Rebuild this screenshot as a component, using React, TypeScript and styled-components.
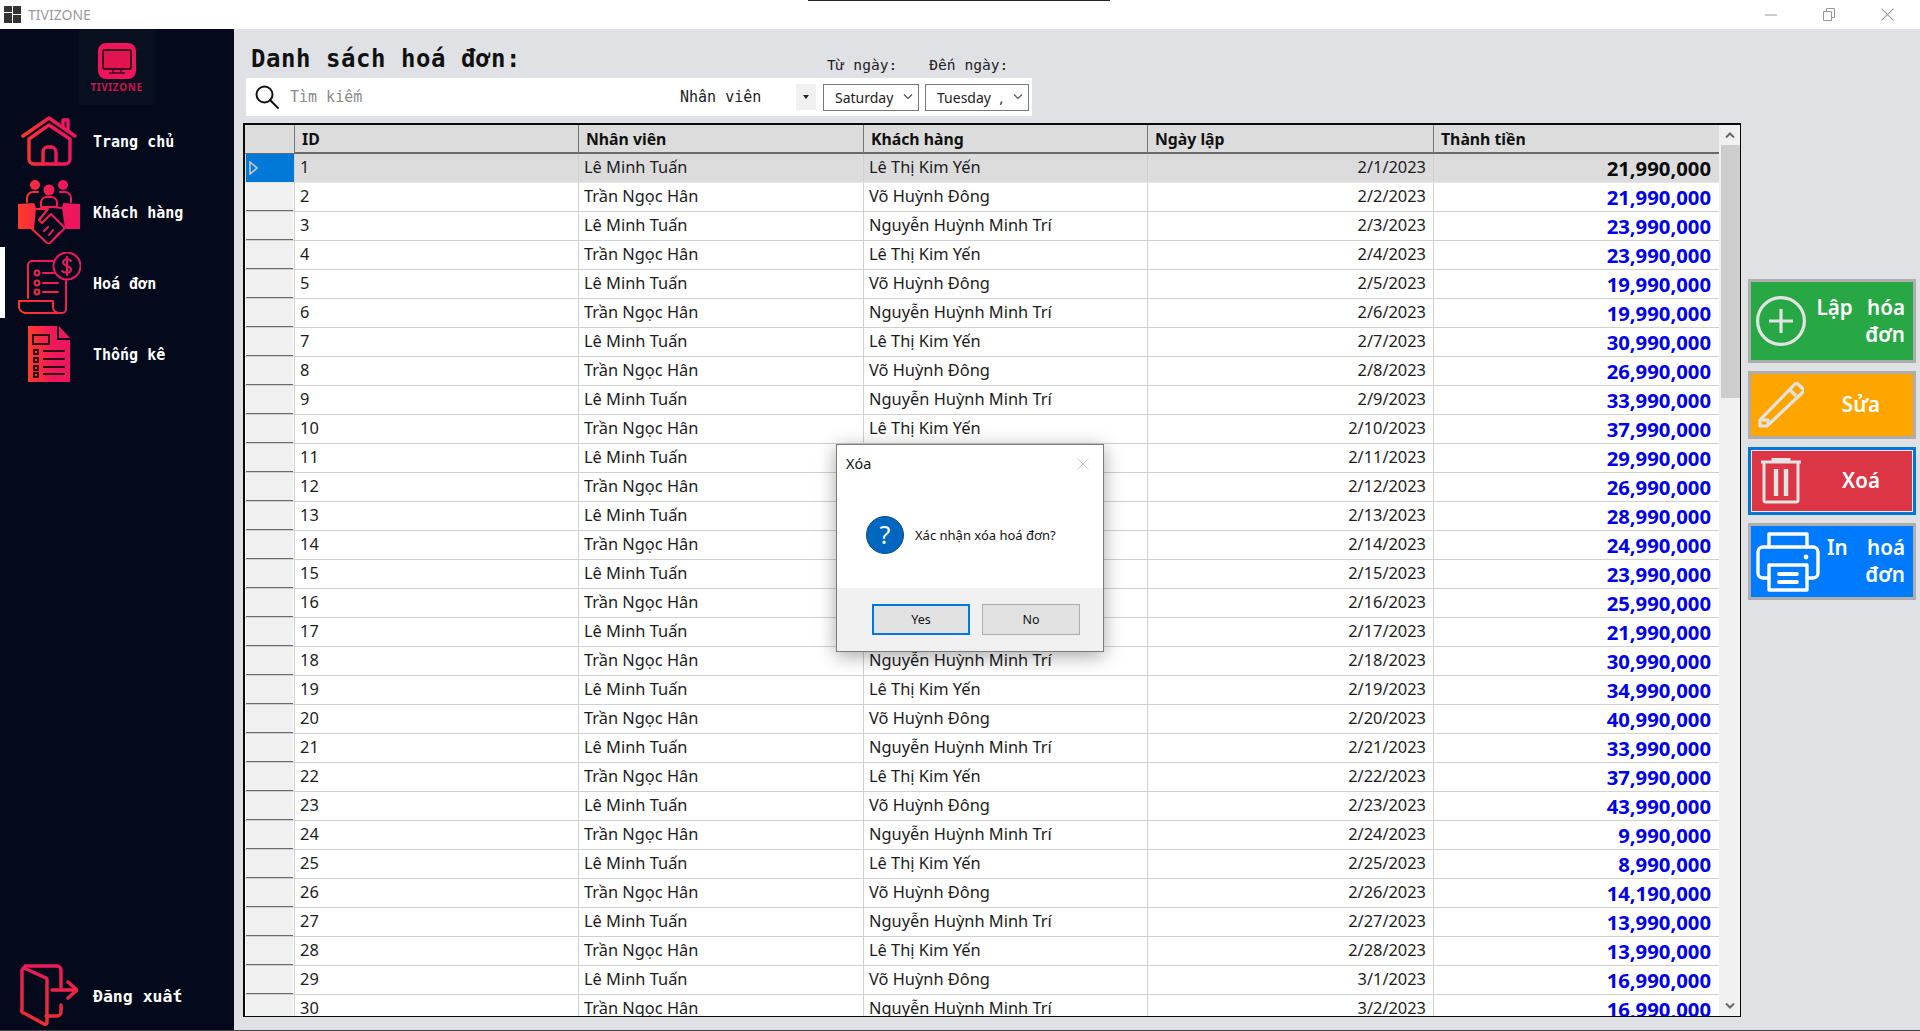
import styled, { createGlobalStyle } from 'styled-components'

const GlobalStyle = createGlobalStyle`
  html, body { margin: 0; padding: 0; overflow: hidden; }
  #root { width: 1920px; height: 1031px; }
`

const MONO = '"DejaVu Sans Mono", "Liberation Mono", monospace'
const UI = '"Noto Sans", "Open Sans", sans-serif'

const Page = styled.div`
  position: relative;
  width: 1920px;
  height: 1031px;
  box-sizing: border-box;
  display: flex;
  flex-direction: column;
  overflow: hidden;
  background: #e0e1e5;
  border-bottom: 1px solid #444;
  font-family: ${UI};
`
const TopEdge = styled.div`
  position: absolute;
  top: 0;
  left: 808px;
  width: 302px;
  height: 1px;
  background: #222;
`
const TitleBar = styled.div`
  flex: none;
  height: 29px;
  display: flex;
  align-items: center;
  background: #fff;
  padding: 0 4px;
`
const AppName = styled.span`
  margin-left: 7px;
  font-size: 14px;
  color: #9a9a9a;
  flex: 1;
`
const WinButton = styled.div`
  width: 58px;
  height: 29px;
  display: flex;
  align-items: center;
  justify-content: center;
`
const Body = styled.div`
  flex: 1;
  min-height: 0;
  display: flex;
`
const Sidebar = styled.nav`
  flex: none;
  width: 234px;
  display: flex;
  flex-direction: column;
  background: #040a1c;
`
const LogoBox = styled.div`
  align-self: center;
  margin-left: -1px;
  width: 76px;
  height: 76px;
  box-sizing: border-box;
  padding-top: 14px;
  background: #08101f;
  display: flex;
  flex-direction: column;
  align-items: center;
`
const LogoText = styled.span`
  margin-top: 2px;
  font-family: ${UI};
  font-size: 10px;
  line-height: 12px;
  font-weight: 700;
  letter-spacing: 0.6px;
  color: #cc1450;
`
const NavList = styled.div`
  flex: 1;
  display: flex;
  flex-direction: column;
`
const NavRow = styled.div<{ $active?: boolean }>`
  height: 71px;
  display: flex;
  align-items: center;
  box-sizing: border-box;
  border-left: 5px solid ${(p) => (p.$active ? '#fff' : 'transparent')};
`
const NavIcon = styled.div`
  flex: none;
  width: 88px;
  display: flex;
  justify-content: center;
`
const NavLabel = styled.span<{ $large?: boolean }>`
  margin-top: ${(p) => (p.$large ? '2px' : '3px')};
  font-family: ${MONO};
  font-size: ${(p) => (p.$large ? '16.5px' : '15px')};
  font-weight: 700;
  color: #fff;
`
const LogoutRow = styled(NavRow)`
  height: 70px;
`
const Main = styled.main`
  flex: 1;
  min-width: 0;
  display: flex;
`
const Content = styled.div`
  flex: none;
  width: 1507px;
  box-sizing: border-box;
  padding-left: 9px;
  display: flex;
  flex-direction: column;
`
const TopRow = styled.div`
  width: 789px;
  height: 49px;
  display: flex;
  align-items: flex-end;
`
const Title = styled.h1`
  flex: 1;
  margin: 0 0 4px 8px;
  font-family: ${MONO};
  font-size: 24px;
  letter-spacing: 0.55px;
  line-height: 30px;
  font-weight: 700;
  color: #111;
`
const DateLabels = styled.div`
  flex: none;
  width: 205px;
  display: flex;
  gap: 32px;
  margin-bottom: 4px;
`
const DateLabel = styled.span`
  font-family: ${MONO};
  font-size: 14.6px;
  line-height: 18px;
  color: #222;
`
const SearchBar = styled.div`
  margin-left: 3px;
  width: 786px;
  height: 38px;
  box-sizing: border-box;
  padding: 0 3px 0 9px;
  display: flex;
  align-items: center;
  background: #fff;
`
const SearchText = styled.span`
  flex: 1;
  margin-left: 11px;
  font-family: ${MONO};
  font-size: 15px;
  color: #8a8a8a;
`
const ComboText = styled.span`
  width: 116px;
  font-family: ${MONO};
  font-size: 15px;
  color: #222;
`
const ComboArrow = styled.div`
  width: 20px;
  height: 26px;
  background: #f0f0f0;
  display: flex;
  align-items: center;
  justify-content: center;
  &::after {
    content: '';
    border: 3px solid transparent;
    border-top: 4px solid #222;
    border-bottom: 0;
  }
`
const DateBox = styled.div<{ $w: number; $ml: number }>`
  width: ${(p) => p.$w}px;
  margin-left: ${(p) => p.$ml}px;
  height: 27px;
  box-sizing: border-box;
  padding: 0 5px 0 11px;
  display: flex;
  align-items: center;
  justify-content: space-between;
  border: 1px solid #7a7a7a;
  font-size: 14px;
  word-spacing: 5px;
  white-space: pre;
  color: #222;
  background: #fff;
`
const GridFrame = styled.div`
  margin-top: 7px;
  width: 1498px;
  height: 894px;
  box-sizing: border-box;
  border: solid #0a0a0a;
  border-width: 2px 1.5px 1.5px 2px;
  display: flex;
  overflow: hidden;
  background: #f0f0f0;
`
const GridBody = styled.div`
  flex: 1;
  min-width: 0;
  overflow: hidden;
`
const Row = styled.div<{ $selected?: boolean }>`
  height: 29px;
  box-sizing: border-box;
  display: grid;
  grid-template-columns: 49px 284px 285px 284px 286px 285px;
  background: ${(p) => (p.$selected ? '#dcdcdc' : '#fff')};
  border-bottom: 1px solid ${(p) => (p.$selected ? '#e6e6e6' : '#d0d0d0')};
`
const HeaderRow = styled(Row)`
  background: #dcdcdc;
  border-bottom: 2px solid #696969;
`
const HeadCell = styled.div`
  padding: 1px 0 0 7px;
  font-size: 15.8px;
  font-weight: 700;
  line-height: 27px;
  color: #111;
  border-left: 1px solid #777;
`
const Corner = styled.div`
  background: #dcdcdc;
`
const RowHead = styled.div<{ $selected?: boolean }>`
  margin: 0 ${(p) => (p.$selected ? '0' : '1px')} 0 1px;
  display: flex;
  align-items: center;
  padding-left: 3px;
  background: ${(p) => (p.$selected ? '#0078d7' : '#f0f0f0')};
  border-bottom: 1px solid ${(p) => (p.$selected ? '#0078d7' : '#696969')};
`
const Cell = styled.div`
  padding-left: 5px;
  font-size: 16.4px;
  line-height: 25px;
  color: #1c1c1c;
  white-space: nowrap;
  border-left: 1px solid #d0d0d0;
`
const DateCell = styled(Cell)`
  padding: 0 7px 0 0;
  text-align: right;
`
const MoneyCell = styled(Cell)<{ $selected?: boolean }>`
  padding: 2px 7px 0 0;
  text-align: right;
  font-size: 20.3px;
  font-weight: 700;
  color: ${(p) => (p.$selected ? '#0a0a0a' : '#0000ee')};
`
const ScrollBar = styled.div`
  flex: none;
  width: 21px;
  display: flex;
  flex-direction: column;
  background: #f0f0f0;
`
const ScrollArrow = styled.div`
  flex: none;
  height: 20px;
  display: flex;
  align-items: center;
  justify-content: center;
`
const ScrollThumb = styled.div`
  flex: none;
  height: 253px;
  margin: 0 0 0 2px;
  background: #cdcdcd;
`
const ScrollTrack = styled.div`
  flex: 1;
`
const Actions = styled.aside`
  flex: none;
  width: 168px;
  margin-left: 7px;
  padding-top: 250px;
  display: flex;
  flex-direction: column;
  gap: 8px;
`
const ActionButton = styled.button<{ $bg: string; $h: number; $focus?: boolean }>`
  height: ${(p) => p.$h}px;
  width: 168px;
  box-sizing: border-box;
  padding: 0;
  display: flex;
  align-items: center;
  background: ${(p) => p.$bg};
  border: 3px solid ${(p) => (p.$focus ? '#0078d7' : '#adadad')};
  box-shadow: inset 0 0 0 ${(p) => (p.$focus ? '1px #e8e8e8' : '0 transparent')};
  font-family: ${UI};
  color: #fff;
`
const ActionIcon = styled.div<{ $w: number }>`
  flex: none;
  width: ${(p) => p.$w}px;
  padding-left: 2px;
  display: flex;
  justify-content: center;
`
const ActionLabel = styled.span<{ $right?: boolean; $gap?: number }>`
  flex: 1;
  margin-top: -1px;
  padding-right: ${(p) => (p.$right ? '8px' : '0')};
  text-align: ${(p) => (p.$right ? 'right' : 'center')};
  font-size: 20.6px;
  line-height: 27px;
  font-weight: 600;
  word-spacing: ${(p) => p.$gap ?? 9}px;
`
const Dialog = styled.div`
  position: absolute;
  left: 836px;
  top: 444px;
  width: 268px;
  height: 208px;
  box-sizing: border-box;
  display: flex;
  flex-direction: column;
  background: #fff;
  border: 1px solid #7c7c7c;
  box-shadow: 0 4px 18px rgba(0, 0, 0, 0.35);
`
const DialogHead = styled.div`
  flex: none;
  height: 37px;
  padding: 0 14px 0 9px;
  display: flex;
  align-items: center;
  justify-content: space-between;
  font-size: 14.4px;
  color: #111;
`
const DialogBody = styled.div`
  flex: 1;
  padding-left: 29px;
  display: flex;
  align-items: center;
  gap: 11px;
  font-size: 13px;
  color: #111;
`
const DialogFoot = styled.div`
  flex: none;
  height: 63px;
  box-sizing: border-box;
  padding: 16px 23px 0 35px;
  display: flex;
  gap: 12px;
  background: #f0f0f0;
`
const DialogButton = styled.button<{ $focus?: boolean }>`
  width: 98px;
  height: 31px;
  padding: 0;
  box-sizing: border-box;
  background: #e1e1e1;
  border: ${(p) => (p.$focus ? '2px solid #0078d7' : '1px solid #adadad')};
  font-family: ${UI};
  font-size: 12.5px;
  color: #111;
`

const employees = ['Lê Minh Tuấn', 'Trần Ngọc Hân']
const customers = ['Lê Thị Kim Yến', 'Võ Huỳnh Đông', 'Nguyễn Huỳnh Minh Trí']
const amounts = [
  '21,990,000', '21,990,000', '23,990,000', '23,990,000', '19,990,000', '19,990,000',
  '30,990,000', '26,990,000', '33,990,000', '37,990,000', '29,990,000', '26,990,000',
  '28,990,000', '24,990,000', '23,990,000', '25,990,000', '21,990,000', '30,990,000',
  '34,990,000', '40,990,000', '33,990,000', '37,990,000', '43,990,000', '9,990,000',
  '8,990,000', '14,190,000', '13,990,000', '13,990,000', '16,990,000', '16,990,000',
]
const rows = amounts.map((amount, i) => ({
  id: i + 1,
  employee: employees[i % 2],
  customer: customers[i % 3],
  date: i < 28 ? `2/${i + 1}/2023` : `3/${i - 27}/2023`,
  amount,
}))

const Grad = ({ id, w, h = 0 }: { id: string; w: number; h?: number }) => (
  <defs>
    <linearGradient id={id} gradientUnits="userSpaceOnUse" x1="0" y1={h} x2={w} y2="0">
      <stop offset="0" stopColor="#ff3b2b" />
      <stop offset="0.6" stopColor="#f0185a" />
      <stop offset="1" stopColor="#ee1560" />
    </linearGradient>
  </defs>
)

const WindowIcon = () => (
  <svg width="17" height="17" viewBox="0 0 17 17">
    <path d="M0 0h8v6H0zM9 0h8v8H9zM0 7h8v10H0zM9 9h8v8H9z" fill="#333" />
  </svg>
)

const LogoIcon = () => (
  <svg width="38" height="36" viewBox="0 0 38 36">
    <rect width="38" height="36" rx="8" fill="#f0145a" />
    <rect x="5" y="7" width="28" height="19" rx="2" fill="#e0144f" stroke="#3a0a20" strokeWidth="2" />
    <path d="M11 30h16M15 26h8v4h-8z" stroke="#3a0a20" strokeWidth="1.6" fill="none" />
  </svg>
)

const HomeIcon = () => (
  <svg width="56" height="50" viewBox="0 0 56 50" fill="none">
    <Grad id="g-home" w={56} />
    <g stroke="url(#g-home)" strokeWidth="3.4" strokeLinecap="round" strokeLinejoin="round">
      <path d="M2 20 28 2l26 18" />
      <path d="M28 9 8 23v20a5 5 0 0 0 5 5h31a5 5 0 0 0 5-5V23L28 9z" />
      <path d="M22 48V36a5 5 0 0 1 5-5h3a5 5 0 0 1 5 5v12" />
      <path d="M42 11V4h5v11" />
    </g>
  </svg>
)

const HandshakeIcon = () => (
  <svg width="62" height="64" viewBox="0 0 62 64" fill="none">
    <Grad id="g-hand" w={62} />
    <g fill="url(#g-hand)">
      <circle cx="17" cy="5" r="5" />
      <circle cx="31" cy="10" r="5.5" />
      <circle cx="45" cy="5" r="5" />
      <path d="M0 24l16-1 2 5-2 21H0z" />
      <path d="M62 24l-17-1-1 5 3 21h15z" />
    </g>
    <g stroke="url(#g-hand)" strokeWidth="2" strokeLinecap="round" strokeLinejoin="round">
      <path d="M9 22v-4a6 6 0 0 1 6-6h5M53 22v-4a6 6 0 0 0-6-6h-5" />
      <path d="M23 27v-5a6 6 0 0 1 6-5h4a6 6 0 0 1 6 5v5H23z" />
      <path d="M18 29h12l-9 11 3 3 9-9 13 13" />
      <path d="M12 47l17 16a3 3 0 0 0 4-1l15-15M44 28l-9-1M26 51l4-4M31 55l4-5M36 59l5-6" />
    </g>
  </svg>
)

const InvoiceIcon = () => (
  <svg width="64" height="62" viewBox="0 0 64 62" fill="none">
    <Grad id="g-inv" w={64} h={62} />
    <g stroke="url(#g-inv)" strokeWidth="2" strokeLinecap="round" strokeLinejoin="round">
      <path d="M11 46V13a4 4 0 0 1 4-4h21" />
      <path d="M49 29v28a4 4 0 0 1-4 4H8a7 7 0 0 1-6-8v-4h34v6a6 6 0 0 0 6 6" />
      <circle cx="50" cy="14" r="13.5" />
      <path d="M54 9c-1-2-7-3-8 1 0 5 9 3 8 8-1 4-7 3-9 1M50 5v18" />
      <circle cx="20" cy="21" r="2.4" />
      <circle cx="20" cy="31" r="2.4" />
      <circle cx="20" cy="40" r="2.4" />
      <path d="M26 21h11M26 31h15M26 40h15" />
    </g>
  </svg>
)

const ReportIcon = () => (
  <svg width="42" height="56" viewBox="0 0 42 56">
    <Grad id="g-rep" w={42} />
    <path d="M0 0h29v14h13v42H0z" fill="url(#g-rep)" />
    <path d="M31 0l11 12H31z" fill="url(#g-rep)" />
    <g fill="none" stroke="#2a0616" strokeWidth="2">
      <rect x="5" y="9" width="16" height="9" />
      <rect x="6" y="24" width="4" height="4" />
      <rect x="6" y="32" width="4" height="4" />
      <rect x="6" y="40" width="4" height="4" />
      <rect x="6" y="47" width="4" height="4" />
      <path d="M15 25h22M15 33h22M15 41h22M15 48h22" />
    </g>
  </svg>
)

const LogoutIcon = () => (
  <svg width="58" height="64" viewBox="0 0 58 64" fill="none">
    <defs>
      <linearGradient id="g-out" gradientUnits="userSpaceOnUse" x1="0" y1="0" x2="0" y2="64">
        <stop offset="0" stopColor="#f0185a" />
        <stop offset="1" stopColor="#ee3030" />
      </linearGradient>
    </defs>
    <g stroke="url(#g-out)" strokeWidth="3.4" strokeLinecap="round" strokeLinejoin="round">
      <path d="M5 3h32a4 4 0 0 1 4 4v17M41 42v7a4 4 0 0 1-4 4H26" />
      <path d="M4 5 26 15a2 2 0 0 1 1 2v43a2 2 0 0 1-3 1L4 50a2 2 0 0 1-2-3V7a3 3 0 0 1 2-2z" />
      <path d="M32 27h24M48 19l9 8-9 8" />
    </g>
  </svg>
)

const SearchIcon = () => (
  <svg width="24" height="24" viewBox="0 0 24 24" fill="none" stroke="#111" strokeWidth="2">
    <ellipse cx="9.5" cy="9.5" rx="8" ry="8" />
    <path d="M15 15l8 8" strokeLinecap="round" />
  </svg>
)

const Chevron = ({ up, color = '#555', width = 1.2 }: { up?: boolean; color?: string; width?: number }) => (
  <svg width="10" height="6" viewBox="0 0 10 6" fill="none" stroke={color} strokeWidth={width}>
    <path d={up ? 'M1 5.5 5 1.5l4 4' : 'M1 .5l4 4 4-4'} />
  </svg>
)

const CloseGlyph = ({ size, color }: { size: number; color: string }) => (
  <svg width={size} height={size} viewBox="0 0 12 12" fill="none" stroke={color} strokeWidth="1">
    <path d="M.5.5l11 11M11.5.5l-11 11" />
  </svg>
)

const PlusIcon = () => (
  <svg width="50" height="50" viewBox="0 0 50 50" fill="none" stroke="#e3e3e3" strokeWidth="3.2">
    <circle cx="25" cy="25" r="23.4" />
    <path d="M25 13v24M13 25h24" />
  </svg>
)

const PencilIcon = () => (
  <svg width="46" height="46" viewBox="0 0 46 46" fill="none" stroke="#e3e3e3" strokeWidth="3.2" strokeLinejoin="round">
    <path d="M2 44v-6L36 3a3 3 0 0 1 5 0l3 3a3 3 0 0 1 0 5L9 44H2z" />
    <path d="M4 38h6v4M32 8l6 6" />
  </svg>
)

const TrashIcon = () => (
  <svg width="40" height="46" viewBox="0 0 40 46" fill="none" stroke="#e3e3e3" strokeWidth="3">
    <path d="M0 4h40M12 3V1h16v2" />
    <path d="M3 4v38a2 2 0 0 0 2 2h30a2 2 0 0 0 2-2V4" />
    <path d="M15 11v27M25 11v27" strokeWidth="4.4" />
  </svg>
)

const PrinterIcon = () => (
  <svg width="64" height="60" viewBox="0 0 64 60" fill="none" stroke="#fff" strokeWidth="3.4" strokeLinejoin="round" strokeLinecap="round">
    <path d="M13 15V2h38v13" />
    <path d="M13 46H7a5 5 0 0 1-5-5V20a5 5 0 0 1 5-5h50a5 5 0 0 1 5 5v21a5 5 0 0 1-5 5h-6" />
    <path d="M13 33h38v25H13z" />
    <path d="M23 42h18M23 50h18" strokeWidth="3.8" />
    <circle cx="50" cy="25" r="2.4" fill="#fff" stroke="none" />
  </svg>
)

const QuestionIcon = () => (
  <svg width="38" height="38" viewBox="0 0 38 38">
    <circle cx="19" cy="19" r="18.5" fill="#0067c0" stroke="#0c4a80" />
    <text x="19" y="27.5" textAnchor="middle" fontFamily={UI} fontSize="25" fill="#fff">?</text>
  </svg>
)

const navItems = [
  { label: 'Trang chủ', icon: <HomeIcon /> },
  { label: 'Khách hàng', icon: <HandshakeIcon /> },
  { label: 'Hoá đơn', icon: <InvoiceIcon />, active: true },
  { label: 'Thống kê', icon: <ReportIcon /> },
]

const App = () => {
  return (
    <Page>
      <GlobalStyle />
      <TopEdge />
      <TitleBar>
        <WindowIcon />
        <AppName>TIVIZONE</AppName>
        <WinButton>
          <svg width="12" height="2"><path d="M0 1h12" stroke="#999" /></svg>
        </WinButton>
        <WinButton>
          <svg width="13" height="13" fill="none" stroke="#999"><path d="M.5 3.5h8v9h-8zM3.5 3V.5h8v9H9" /></svg>
        </WinButton>
        <WinButton>
          <CloseGlyph size={13} color="#999" />
        </WinButton>
      </TitleBar>
      <Body>
        <Sidebar>
          <LogoBox>
            <LogoIcon />
            <LogoText>TIVIZONE</LogoText>
          </LogoBox>
          <NavList>
            {navItems.map((item) => (
              <NavRow key={item.label} $active={item.active}>
                <NavIcon>{item.icon}</NavIcon>
                <NavLabel>{item.label}</NavLabel>
              </NavRow>
            ))}
          </NavList>
          <LogoutRow>
            <NavIcon><LogoutIcon /></NavIcon>
            <NavLabel $large>Đăng xuất</NavLabel>
          </LogoutRow>
        </Sidebar>
        <Main>
          <Content>
            <TopRow>
              <Title>Danh sách hoá đơn:</Title>
              <DateLabels>
                <DateLabel>Từ ngày:</DateLabel>
                <DateLabel>Đến ngày:</DateLabel>
              </DateLabels>
            </TopRow>
            <SearchBar>
              <SearchIcon />
              <SearchText>Tìm kiếm</SearchText>
              <ComboText>Nhân viên</ComboText>
              <ComboArrow />
              <DateBox $w={96} $ml={7}>Saturday<Chevron /></DateBox>
              <DateBox $w={104} $ml={6}>Tuesday ,<Chevron /></DateBox>
            </SearchBar>
            <GridFrame>
              <GridBody>
                <HeaderRow>
                  <Corner />
                  <HeadCell>ID</HeadCell>
                  <HeadCell>Nhân viên</HeadCell>
                  <HeadCell>Khách hàng</HeadCell>
                  <HeadCell>Ngày lập</HeadCell>
                  <HeadCell>Thành tiền</HeadCell>
                </HeaderRow>
                {rows.map((row, i) => (
                  <Row key={row.id} $selected={i === 0}>
                    <RowHead $selected={i === 0}>
                      {i === 0 && (
                        <svg width="9" height="14" viewBox="0 0 9 14">
                          <path d="M1 1l7 6-7 6z" fill="#0078d7" stroke="#c8c8c8" strokeWidth="1.6" />
                        </svg>
                      )}
                    </RowHead>
                    <Cell>{row.id}</Cell>
                    <Cell>{row.employee}</Cell>
                    <Cell>{row.customer}</Cell>
                    <DateCell>{row.date}</DateCell>
                    <MoneyCell $selected={i === 0}>{row.amount}</MoneyCell>
                  </Row>
                ))}
              </GridBody>
              <ScrollBar>
                <ScrollArrow><Chevron up width={2} color="#666" /></ScrollArrow>
                <ScrollThumb />
                <ScrollTrack />
                <ScrollArrow><Chevron width={2} color="#666" /></ScrollArrow>
              </ScrollBar>
            </GridFrame>
          </Content>
          <Actions>
            <ActionButton $bg="#28a745" $h={84}>
              <ActionIcon $w={56}><PlusIcon /></ActionIcon>
              <ActionLabel $right>Lập hóa đơn</ActionLabel>
            </ActionButton>
            <ActionButton $bg="#ffa500" $h={68}>
              <ActionIcon $w={56}><PencilIcon /></ActionIcon>
              <ActionLabel>Sửa</ActionLabel>
            </ActionButton>
            <ActionButton $bg="#dc3545" $h={68} $focus>
              <ActionIcon $w={56}><TrashIcon /></ActionIcon>
              <ActionLabel>Xoá</ActionLabel>
            </ActionButton>
            <ActionButton $bg="#007bff" $h={77}>
              <ActionIcon $w={70}><PrinterIcon /></ActionIcon>
              <ActionLabel $right $gap={14}>In hoá đơn</ActionLabel>
            </ActionButton>
          </Actions>
        </Main>
      </Body>
      <Dialog>
        <DialogHead>
          Xóa
          <CloseGlyph size={12} color="#c8c8c8" />
        </DialogHead>
        <DialogBody>
          <QuestionIcon />
          Xác nhận xóa hoá đơn?
        </DialogBody>
        <DialogFoot>
          <DialogButton $focus>Yes</DialogButton>
          <DialogButton>No</DialogButton>
        </DialogFoot>
      </Dialog>
    </Page>
  )
}

export default App
